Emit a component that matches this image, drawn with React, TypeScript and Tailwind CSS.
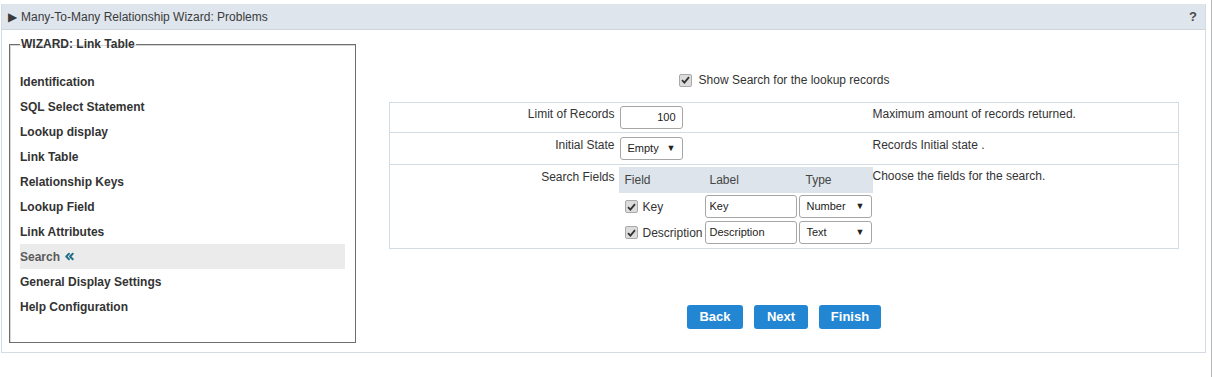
import React from "react";
import { ChevronsLeft } from "lucide-react";

const steps = [
  "Identification",
  "SQL Select Statement",
  "Lookup display",
  "Link Table",
  "Relationship Keys",
  "Lookup Field",
  "Link Attributes",
  "Search",
  "General Display Settings",
  "Help Configuration",
];

const Check = () => (
  <span className="inline-flex h-[13px] w-[13px] items-center justify-center rounded-[2px] border border-[#a9a9a9] bg-[#dcdcdc]">
    <svg width="9" height="8" viewBox="0 0 9 8">
      <path d="M1 4.2 L3.4 6.6 L8 1.2" fill="none" stroke="#333" strokeWidth="1.8" />
    </svg>
  </span>
);

const FakeSelect = ({ value, w }: { value: string; w: string }) => (
  <div
    className={`flex h-[23px] ${w} items-center justify-between rounded-[3px] border border-[#a6a6a6] bg-white pl-[7px] pr-[6px] text-[11px] text-[#222]`}
  >
    <span>{value}</span>
    <span className="text-[9px]">▼</span>
  </div>
);

export default function App() {
  return (
    <div className="h-[377px] w-[1213px] bg-white font-['Liberation_Sans',Arial,sans-serif] text-[12px] text-[#333]">
      <div className="h-full w-[1212px] border-r border-[#b8b8b8] pl-[1px] pt-[4px]">
        <div className="w-[1205px] border border-t-0 border-[#d3dce4]">
          {/* header */}
          <div className="flex h-[26px] items-center justify-between border-b border-[#cdd6df] bg-[#dfe5ed] pl-[6px] pr-[8px]">
            <span className="flex items-center text-[#3a3a3a]">
              <span className="mr-[4px] text-[12px] leading-none">▶</span>Many-To-Many Relationship Wizard: Problems
            </span>
            <span className="text-[13px] font-bold text-[#4a4a4a]">?</span>
          </div>

          <div className="flex h-[322px]">
            {/* steps */}
            <div className="pl-[7px] pt-[5px]">
              <fieldset className="h-[308px] w-[347px] border border-[#6e6e6e] px-[10px] shadow-[inset_1px_1px_0_#d6d6d6]">
                <legend className="ml-0 px-[1px] text-[12px] font-bold text-[#333]">
                  WIZARD: Link Table
                </legend>
                <div className="mt-[16px] flex flex-col">
                  {steps.map((s) => (
                    <div
                      key={s}
                      className={`flex h-[25px] items-center font-bold ${
                        s === "Search" ? "bg-[#ebebeb] text-[#5a5a5a]" : "text-[#333]"
                      }`}
                    >
                      {s}
                      {s === "Search" && (
                        <ChevronsLeft className="ml-[3px] h-[13px] w-[13px] text-[#1f6e88]" strokeWidth={3.5} />
                      )}
                    </div>
                  ))}
                </div>
              </fieldset>
            </div>

            {/* form */}
            <div className="flex flex-1 flex-col items-center pl-[28px] pr-[21px] pt-[41px]">
              <div className="flex items-center gap-[7px]">
                <Check />
                <span>Show Search for the lookup records</span>
              </div>

              <table className="mt-[13px] w-[790px] border-collapse border border-[#d3dce4]">
                <tbody>
                  <tr className="h-[30px] border-b border-[#d3dce4]">
                    <td className="w-[229px] pr-[4px] pt-[2px] text-right align-top">Limit of Records</td>
                    <td className="w-[254px] align-top pt-[3px]">
                      <div className="ml-[1px] flex h-[23px] w-[63px] items-center justify-end rounded-[3px] border border-[#a6a6a6] pr-[6px] text-[11px] text-[#222]">
                        100
                      </div>
                    </td>
                    <td className="pt-[2px] align-top">Maximum amount of records returned.</td>
                  </tr>
                  <tr className="h-[32px] border-b border-[#d3dce4]">
                    <td className="pr-[4px] pt-[3px] text-right align-top">Initial State</td>
                    <td className="align-top pt-[4px]">
                      <div className="ml-[1px]">
                        <FakeSelect value="Empty" w="w-[63px]" />
                      </div>
                    </td>
                    <td className="pt-[3px] align-top">Records Initial state .</td>
                  </tr>
                  <tr className="h-[84px]">
                    <td className="pr-[4px] pt-[3px] text-right align-top">Search Fields</td>
                    <td className="align-top pt-[2px]">
                      <div className="w-[254px]">
                        <div className="grid h-[26px] grid-cols-[86px_94px_74px] items-center bg-[#dde4ec] text-[#444]">
                          <span className="pl-[6px]">Field</span>
                          <span className="pl-[5px]">Label</span>
                          <span className="pl-[7px]">Type</span>
                        </div>
                        {[
                          ["Key", "Number"],
                          ["Description", "Text"],
                        ].map(([f, t]) => (
                          <div key={f} className="mt-[1px] grid h-[25px] grid-cols-[86px_94px_74px] items-center">
                            <span className="flex items-center gap-[5px] pl-[6px]">
                              <Check />
                              {f}
                            </span>
                            <div className="flex h-[23px] w-[92px] items-center rounded-[3px] border border-[#a6a6a6] pl-[4px] text-[11px] text-[#222]">
                              {f}
                            </div>
                            <FakeSelect value={t} w="w-[73px]" />
                          </div>
                        ))}
                      </div>
                    </td>
                    <td className="pt-[2px] align-top">Choose the fields for the search.</td>
                  </tr>
                </tbody>
              </table>

              <div className="mt-[56px] flex gap-[11px] text-[13px] font-bold text-white">
                <button className="h-[24px] w-[56px] rounded-[3px] bg-[#2386d3]">Back</button>
                <button className="h-[24px] w-[54px] rounded-[3px] bg-[#2386d3]">Next</button>
                <button className="h-[24px] w-[62px] rounded-[3px] bg-[#2386d3]">Finish</button>
              </div>
            </div>
          </div>
        </div>
      </div>
    </div>
  );
}
